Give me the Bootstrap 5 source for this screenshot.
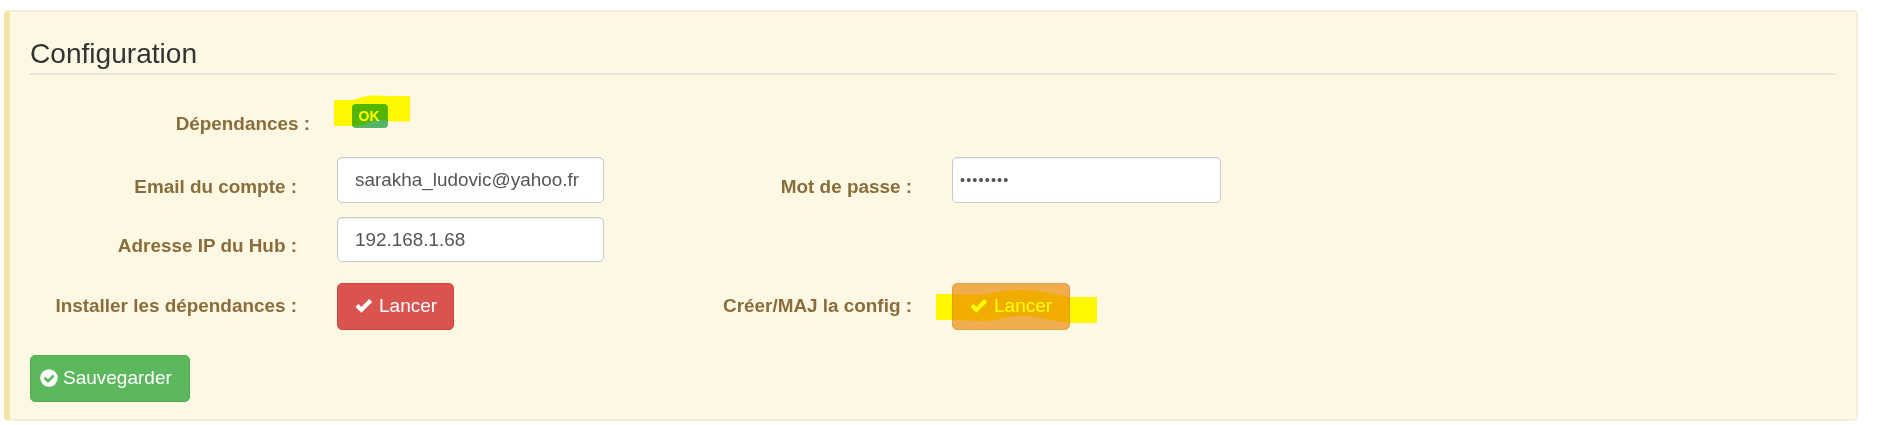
<!DOCTYPE html>
<html lang="fr">
<head>
<meta charset="utf-8">
<meta name="viewport" content="width=device-width, initial-scale=1">
<title>Configuration</title>
<link href="https://cdn.jsdelivr.net/npm/bootstrap@5.3.0/dist/css/bootstrap.min.css" rel="stylesheet">
<style>
body{background:#fff;font-family:"Liberation Sans",Arial,sans-serif;font-size:18.900px;line-height:27px;color:#8a6d3b}
.panel-config{margin:10px 19px 0 4px;height:411px;background:#fdf8e4;border:2px solid #f4eed8;border-left:6px solid #f2e5a3;border-radius:5px;padding:0 20px}
.panel-config legend{font-size:28.100px;line-height:34px;color:#333;height:63px;padding-top:25px;margin:0 0 21px;border-bottom:2px solid #ebe4da;float:none}
.line{height:60px}
.line-short{height:66px}
.line-status{height:61px}
.line-action{height:72px}
.lbl{width:267px;font-weight:700;text-align:right;padding-top:15.500px;margin-right:40px;flex:none;white-space:nowrap}
.lbl-second{width:308px}
.line-status .lbl{width:280px;margin-right:42px;padding-top:14px}
.line-short .lbl{padding-top:15px}
.lbl.lbl-btn{padding-top:9px}
.field{width:267px}
.field .form-control{height:46px;border:1px solid #c8c8c8;border-radius:5px;font-size:18.900px;line-height:27px;color:#555;padding:0 17px;background:#fff;box-shadow:inset 0 1px 1px rgba(0,0,0,.06)}
.field .low{height:45px}
.field-pass{width:269px}
.field-pass .form-control{padding-left:7px;font-size:14.500px;letter-spacing:1.100px}
.btn{font-size:19px;line-height:27px;height:47px;border-radius:5px;padding:0 16px 2px;color:#fff!important;display:inline-flex;align-items:center}
.btn svg{flex:none;margin-right:5px}
.btn-red{width:117px;background:#d9534f;border-color:#d0433f}
.btn-orange{width:118px;background:#f0ad4e;border-color:#e3a04a}
.btn-green{width:160px;padding:0 9px 2px;background:#5cb85c;border-color:#4fae50}
.state{width:36px;height:24px;margin-top:8px;border-radius:4px;background:#54b568;color:#fff;font-size:14px;line-height:24px;padding:0 2px 0 0}
.marker{position:absolute;mix-blend-mode:multiply;pointer-events:none}
.marker-state{left:-18px;top:-1px}
.marker-btn{left:-16px;top:7px}
</style>
</head>
<body>
<form class="panel-config">
  <legend>Configuration</legend>
  <div class="line-status d-flex align-items-start">
    <label class="lbl">Dépendances :</label>
    <div class="position-relative d-flex">
      <span class="badge state">OK</span>
      <svg class="marker marker-state" width="76" height="32" viewBox="0 0 76 32"><path fill="#ff0" d="M0 5H19C25 3 31 0.500 40 0.500C47 0.500 49 1 56 1H76V26.500H56C51 25 44 25 39 26C33 28 29 31 21 31H0Z"/></svg>
    </div>
  </div>
  <div class="line d-flex align-items-start">
    <label class="lbl" for="mail">Email du compte :</label>
    <div class="field"><input id="mail" type="text" class="form-control" value="sarakha_ludovic@yahoo.fr"></div>
    <label class="lbl lbl-second" for="pass">Mot de passe :</label>
    <div class="field-pass field"><input id="pass" type="password" class="form-control" value="logitech"></div>
  </div>
  <div class="line-short d-flex align-items-start">
    <label class="lbl" for="hub">Adresse IP du Hub :</label>
    <div class="field"><input id="hub" type="text" class="form-control low" value="192.168.1.68"></div>
  </div>
  <div class="line-action d-flex align-items-start">
    <label class="lbl lbl-btn">Installer les dépendances :</label>
    <div class="field">
      <button type="button" class="btn btn-red"><svg width="20" height="19" viewBox="0 0 20 19"><path d="M3 9.500L7.400 13.900L16.700 4.600" fill="none" stroke="#fff" stroke-width="4.200"/></svg><span>Lancer</span></button>
    </div>
    <label class="lbl lbl-second lbl-btn">Créer/MAJ la config :</label>
    <div class="position-relative d-flex">
      <button type="button" class="btn btn-orange"><svg width="20" height="19" viewBox="0 0 20 19"><path d="M3 9.500L7.400 13.900L16.700 4.600" fill="none" stroke="#fff" stroke-width="4.200"/></svg><span>Lancer</span></button>
      <svg class="marker marker-btn" width="161" height="34" viewBox="0 0 161 34"><path fill="#ff0" d="M0 4H16L42 5C58 3 67 0 86 0C110 0 118 5 134 7H161V33H134C116 31 102 26 86 26C70 26 64 31 46 31L16 30H0Z"/></svg>
    </div>
  </div>
  <button type="submit" class="btn btn-green"><svg width="18" height="18" viewBox="0 0 18 18"><circle cx="9" cy="9" r="8.700" fill="#fff"/><path d="M4.500 8.700L8 12.200L13.700 6.500" fill="none" stroke="#5cb85c" stroke-width="2.500"/></svg><span>Sauvegarder</span></button>
</form>
<script src="https://cdn.jsdelivr.net/npm/bootstrap@5.3.0/dist/js/bootstrap.bundle.min.js"></script>
</body>
</html>
